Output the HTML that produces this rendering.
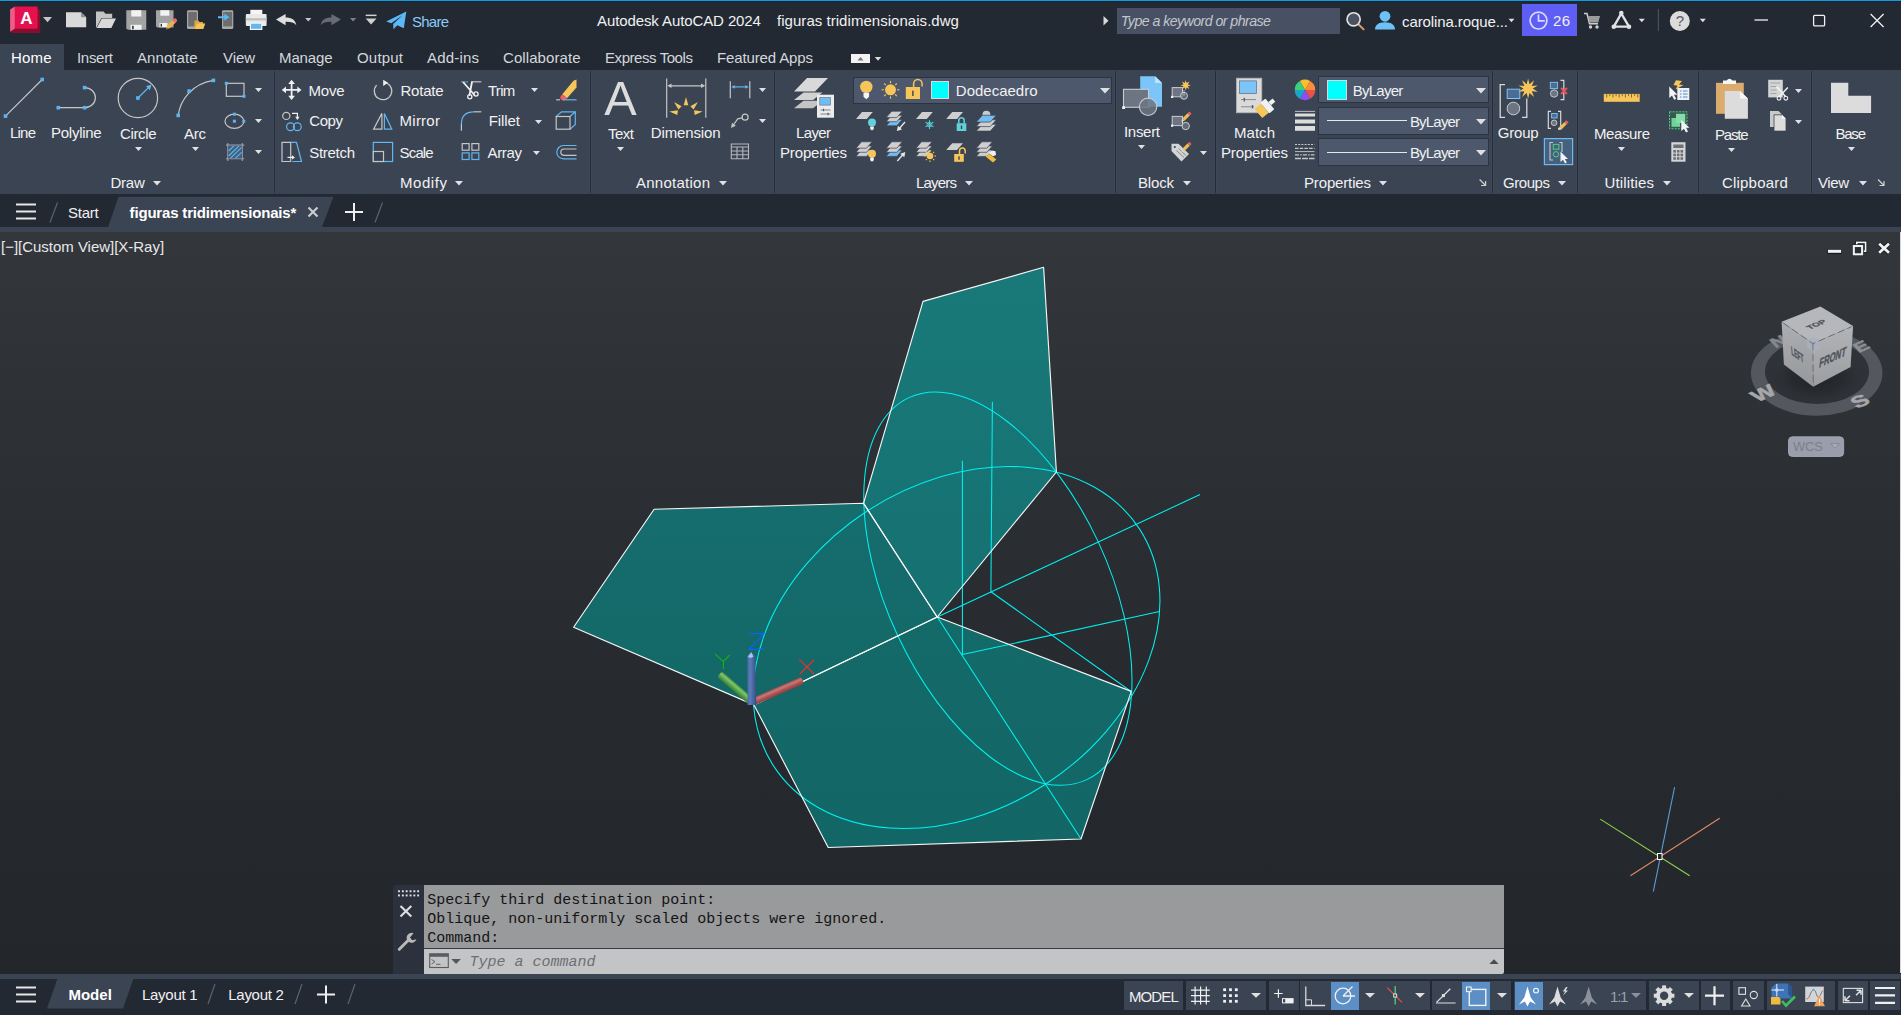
<!DOCTYPE html>
<html><head><meta charset="utf-8"><title>Autodesk AutoCAD 2024 - figuras tridimensionais.dwg</title>
<style>
html,body{margin:0;padding:0}
body{width:1901px;height:1015px;overflow:hidden;position:relative;background:#222933;font-family:"Liberation Sans",sans-serif;}
.t{position:absolute;white-space:nowrap;line-height:20px;}
.b{position:absolute;display:block;overflow:visible}
</style></head><body>
<div class="b" style="left:0.0px;top:0.0px;width:1901.0px;height:1.0px;background:#0b9fe6;"></div>
<div class="b" style="left:0.0px;top:1.0px;width:1901.0px;height:1.0px;background:#1c222b;"></div>
<div class="b" style="left:0.0px;top:2.0px;width:1901.0px;height:68.0px;background:#222933;"></div>
<div class="b" style="left:0.0px;top:44.0px;width:64.0px;height:26.0px;background:#3b4453;"></div>
<div class="b" style="left:0.0px;top:70.0px;width:1901.0px;height:124.0px;background:#3b4453;"></div>
<div class="b" style="left:0.0px;top:194.0px;width:1901.0px;height:34.0px;background:#222933;"></div>
<div class="b" style="left:0.0px;top:227.0px;width:1901.0px;height:5.0px;background:#3b4453;"></div>
<div class="b" style="left:0.0px;top:232.0px;width:1901.0px;height:742.0px;background:linear-gradient(#33373c 0%,#2b2e33 35%,#26292e 65%,#23262b 100%);"></div>
<div class="b" style="left:1900.0px;top:232.0px;width:1.0px;height:741.0px;background:#d4d4e2;"></div>
<div class="b" style="left:0.0px;top:974.0px;width:1901.0px;height:5.0px;background:#3b4453;"></div>
<div class="b" style="left:0.0px;top:979.0px;width:1901.0px;height:36.0px;background:#222933;"></div>
<div class="t" style="left:412.0px;top:11.8px;color:#8ccbf5;font-size:15px;letter-spacing:-0.76px;">Share</div>
<div class="t" style="left:597.0px;top:11.3px;color:#f1f1f1;font-size:15px;letter-spacing:-0.10px;">Autodesk AutoCAD 2024</div>
<div class="t" style="left:777.0px;top:11.3px;color:#f1f1f1;font-size:15px;letter-spacing:0.04px;">figuras tridimensionais.dwg</div>
<div class="b" style="left:1117.0px;top:8.0px;width:223.0px;height:26.0px;background:#485163;"></div>
<div class="t" style="left:1120.8px;top:11.4px;color:#c2c6ce;font-size:14.2px;letter-spacing:-0.56px;font-style:italic;">Type a keyword or phrase</div>
<div class="t" style="left:1402.0px;top:11.8px;color:#f1f1f1;font-size:15px;letter-spacing:-0.10px;">carolina.roque...</div>
<div class="b" style="left:1522.0px;top:4.0px;width:55.0px;height:32.0px;background:#5e5ef5;"></div>
<div class="t" style="left:1553.0px;top:11.3px;color:#f1f1f1;font-size:15px;letter-spacing:0.31px;">26</div>
<div class="t" style="left:11.0px;top:48.3px;color:#ffffff;font-size:15px;letter-spacing:0.16px;">Home</div>
<div class="t" style="left:77.0px;top:48.3px;color:#d4d7dc;font-size:15px;letter-spacing:-0.30px;">Insert</div>
<div class="t" style="left:137.0px;top:48.3px;color:#d4d7dc;font-size:15px;letter-spacing:0.08px;">Annotate</div>
<div class="t" style="left:223.0px;top:48.3px;color:#d4d7dc;font-size:15px;letter-spacing:-0.08px;">View</div>
<div class="t" style="left:279.0px;top:48.3px;color:#d4d7dc;font-size:15px;letter-spacing:-0.12px;">Manage</div>
<div class="t" style="left:357.0px;top:48.3px;color:#d4d7dc;font-size:15px;letter-spacing:0.19px;">Output</div>
<div class="t" style="left:427.0px;top:48.3px;color:#d4d7dc;font-size:15px;letter-spacing:0.19px;">Add-ins</div>
<div class="t" style="left:503.0px;top:48.3px;color:#d4d7dc;font-size:15px;letter-spacing:0.08px;">Collaborate</div>
<div class="t" style="left:605.0px;top:48.3px;color:#d4d7dc;font-size:15px;letter-spacing:-0.43px;">Express Tools</div>
<div class="t" style="left:717.0px;top:48.3px;color:#d4d7dc;font-size:15px;letter-spacing:-0.13px;">Featured Apps</div>
<div class="b" style="left:273.0px;top:71.0px;width:3.0px;height:122.0px;background:#3f4858;"></div>
<div class="b" style="left:274.0px;top:71.0px;width:1.0px;height:122.0px;background:#242a36;"></div>
<div class="b" style="left:589.0px;top:71.0px;width:3.0px;height:122.0px;background:#3f4858;"></div>
<div class="b" style="left:590.0px;top:71.0px;width:1.0px;height:122.0px;background:#242a36;"></div>
<div class="b" style="left:773.0px;top:71.0px;width:3.0px;height:122.0px;background:#3f4858;"></div>
<div class="b" style="left:774.0px;top:71.0px;width:1.0px;height:122.0px;background:#242a36;"></div>
<div class="b" style="left:1114.0px;top:71.0px;width:3.0px;height:122.0px;background:#3f4858;"></div>
<div class="b" style="left:1115.0px;top:71.0px;width:1.0px;height:122.0px;background:#242a36;"></div>
<div class="b" style="left:1214.0px;top:71.0px;width:3.0px;height:122.0px;background:#3f4858;"></div>
<div class="b" style="left:1215.0px;top:71.0px;width:1.0px;height:122.0px;background:#242a36;"></div>
<div class="b" style="left:1491.0px;top:71.0px;width:3.0px;height:122.0px;background:#3f4858;"></div>
<div class="b" style="left:1492.0px;top:71.0px;width:1.0px;height:122.0px;background:#242a36;"></div>
<div class="b" style="left:1576.0px;top:71.0px;width:3.0px;height:122.0px;background:#3f4858;"></div>
<div class="b" style="left:1577.0px;top:71.0px;width:1.0px;height:122.0px;background:#242a36;"></div>
<div class="b" style="left:1697.0px;top:71.0px;width:3.0px;height:122.0px;background:#3f4858;"></div>
<div class="b" style="left:1698.0px;top:71.0px;width:1.0px;height:122.0px;background:#242a36;"></div>
<div class="b" style="left:1810.0px;top:71.0px;width:3.0px;height:122.0px;background:#3f4858;"></div>
<div class="b" style="left:1811.0px;top:71.0px;width:1.0px;height:122.0px;background:#242a36;"></div>
<div class="t" style="left:110.4px;top:173.1px;color:#f1f1f1;font-size:15px;letter-spacing:-0.20px;">Draw</div>
<svg class="b" style="left:152.6px;top:181.2px;" width="8" height="4.5" viewBox="0 0 8 4.5"><path d="M0 0H8L4.0 4.5Z" fill="#e0e0e0"/></svg>
<div class="t" style="left:400.0px;top:173.1px;color:#f1f1f1;font-size:15px;letter-spacing:0.56px;">Modify</div>
<svg class="b" style="left:455.0px;top:181.2px;" width="8" height="4.5" viewBox="0 0 8 4.5"><path d="M0 0H8L4.0 4.5Z" fill="#e0e0e0"/></svg>
<div class="t" style="left:636.0px;top:173.1px;color:#f1f1f1;font-size:15px;letter-spacing:0.25px;">Annotation</div>
<svg class="b" style="left:719.0px;top:181.2px;" width="8" height="4.5" viewBox="0 0 8 4.5"><path d="M0 0H8L4.0 4.5Z" fill="#e0e0e0"/></svg>
<div class="t" style="left:916.0px;top:173.1px;color:#f1f1f1;font-size:15px;letter-spacing:-0.80px;">Layers</div>
<svg class="b" style="left:965.0px;top:181.2px;" width="8" height="4.5" viewBox="0 0 8 4.5"><path d="M0 0H8L4.0 4.5Z" fill="#e0e0e0"/></svg>
<div class="t" style="left:1138.0px;top:173.1px;color:#f1f1f1;font-size:15px;letter-spacing:-0.17px;">Block</div>
<svg class="b" style="left:1183.0px;top:181.2px;" width="8" height="4.5" viewBox="0 0 8 4.5"><path d="M0 0H8L4.0 4.5Z" fill="#e0e0e0"/></svg>
<div class="t" style="left:1304.0px;top:173.1px;color:#f1f1f1;font-size:15px;letter-spacing:-0.15px;">Properties</div>
<svg class="b" style="left:1379.2px;top:181.2px;" width="8" height="4.5" viewBox="0 0 8 4.5"><path d="M0 0H8L4.0 4.5Z" fill="#e0e0e0"/></svg>
<div class="t" style="left:1502.9px;top:173.1px;color:#f1f1f1;font-size:15px;letter-spacing:-0.42px;">Groups</div>
<svg class="b" style="left:1558.3px;top:181.2px;" width="8" height="4.5" viewBox="0 0 8 4.5"><path d="M0 0H8L4.0 4.5Z" fill="#e0e0e0"/></svg>
<div class="t" style="left:1604.4px;top:173.1px;color:#f1f1f1;font-size:15px;letter-spacing:0.16px;">Utilities</div>
<svg class="b" style="left:1662.8px;top:181.2px;" width="8" height="4.5" viewBox="0 0 8 4.5"><path d="M0 0H8L4.0 4.5Z" fill="#e0e0e0"/></svg>
<div class="t" style="left:1722.0px;top:173.1px;color:#f1f1f1;font-size:15px;letter-spacing:0.19px;">Clipboard</div>
<div class="t" style="left:1818.0px;top:173.1px;color:#f1f1f1;font-size:15px;letter-spacing:-0.41px;">View</div>
<svg class="b" style="left:1858.8px;top:181.2px;" width="8" height="4.5" viewBox="0 0 8 4.5"><path d="M0 0H8L4.0 4.5Z" fill="#e0e0e0"/></svg>
<div class="t" style="left:10.0px;top:123.3px;color:#f1f1f1;font-size:15px;letter-spacing:-0.79px;">Line</div>
<div class="t" style="left:51.0px;top:123.3px;color:#f1f1f1;font-size:15px;letter-spacing:-0.26px;">Polyline</div>
<div class="t" style="left:120.0px;top:124.0px;color:#f1f1f1;font-size:15px;letter-spacing:-0.35px;">Circle</div>
<div class="t" style="left:184.0px;top:124.0px;color:#f1f1f1;font-size:15px;letter-spacing:-0.25px;">Arc</div>
<div class="t" style="left:608.0px;top:124.0px;color:#f1f1f1;font-size:15px;letter-spacing:-0.50px;">Text</div>
<div class="t" style="left:650.7px;top:123.3px;color:#f1f1f1;font-size:15px;letter-spacing:-0.11px;">Dimension</div>
<div class="t" style="left:796.0px;top:123.3px;color:#f1f1f1;font-size:15px;letter-spacing:-0.63px;">Layer</div>
<div class="t" style="left:780.0px;top:142.8px;color:#f1f1f1;font-size:15px;letter-spacing:-0.15px;">Properties</div>
<div class="t" style="left:1124.0px;top:122.3px;color:#f1f1f1;font-size:15px;letter-spacing:-0.30px;">Insert</div>
<div class="t" style="left:1234.0px;top:123.0px;color:#f1f1f1;font-size:15px;letter-spacing:0.04px;">Match</div>
<div class="t" style="left:1221.0px;top:142.8px;color:#f1f1f1;font-size:15px;letter-spacing:-0.15px;">Properties</div>
<div class="t" style="left:1497.8px;top:123.0px;color:#f1f1f1;font-size:15px;letter-spacing:-0.20px;">Group</div>
<div class="t" style="left:1594.0px;top:124.3px;color:#f1f1f1;font-size:15px;letter-spacing:-0.39px;">Measure</div>
<div class="t" style="left:1715.0px;top:125.2px;color:#f1f1f1;font-size:15px;letter-spacing:-1.20px;">Paste</div>
<div class="t" style="left:1835.4px;top:124.3px;color:#f1f1f1;font-size:15px;letter-spacing:-1.20px;">Base</div>
<svg class="b" style="left:134.5px;top:146.8px;" width="7" height="4" viewBox="0 0 7 4"><path d="M0 0H7L3.5 4Z" fill="#e0e0e0"/></svg>
<svg class="b" style="left:191.5px;top:146.8px;" width="7" height="4" viewBox="0 0 7 4"><path d="M0 0H7L3.5 4Z" fill="#e0e0e0"/></svg>
<svg class="b" style="left:616.9px;top:146.8px;" width="7" height="4" viewBox="0 0 7 4"><path d="M0 0H7L3.5 4Z" fill="#e0e0e0"/></svg>
<svg class="b" style="left:1138.1px;top:145.0px;" width="7" height="4" viewBox="0 0 7 4"><path d="M0 0H7L3.5 4Z" fill="#e0e0e0"/></svg>
<svg class="b" style="left:1618.2px;top:146.8px;" width="7" height="4" viewBox="0 0 7 4"><path d="M0 0H7L3.5 4Z" fill="#e0e0e0"/></svg>
<svg class="b" style="left:1727.8px;top:147.6px;" width="7" height="4" viewBox="0 0 7 4"><path d="M0 0H7L3.5 4Z" fill="#e0e0e0"/></svg>
<svg class="b" style="left:1847.5px;top:146.8px;" width="7" height="4" viewBox="0 0 7 4"><path d="M0 0H7L3.5 4Z" fill="#e0e0e0"/></svg>
<div class="t" style="left:308.6px;top:80.9px;color:#f1f1f1;font-size:15px;letter-spacing:-0.23px;">Move</div>
<div class="t" style="left:309.3px;top:111.4px;color:#f1f1f1;font-size:15px;letter-spacing:-0.44px;">Copy</div>
<div class="t" style="left:309.3px;top:142.6px;color:#f1f1f1;font-size:15px;letter-spacing:-0.30px;">Stretch</div>
<div class="t" style="left:400.4px;top:80.9px;color:#f1f1f1;font-size:15px;letter-spacing:-0.18px;">Rotate</div>
<div class="t" style="left:399.6px;top:111.4px;color:#f1f1f1;font-size:15px;letter-spacing:0.23px;">Mirror</div>
<div class="t" style="left:399.6px;top:142.6px;color:#f1f1f1;font-size:15px;letter-spacing:-0.86px;">Scale</div>
<div class="t" style="left:487.9px;top:80.9px;color:#f1f1f1;font-size:15px;letter-spacing:-0.68px;">Trim</div>
<div class="t" style="left:488.8px;top:111.4px;color:#f1f1f1;font-size:15px;letter-spacing:-0.11px;">Fillet</div>
<div class="t" style="left:487.6px;top:142.6px;color:#f1f1f1;font-size:15px;letter-spacing:-0.38px;">Array</div>
<svg class="b" style="left:254.5px;top:88.0px;" width="7" height="4" viewBox="0 0 7 4"><path d="M0 0H7L3.5 4Z" fill="#e0e0e0"/></svg>
<svg class="b" style="left:254.5px;top:119.0px;" width="7" height="4" viewBox="0 0 7 4"><path d="M0 0H7L3.5 4Z" fill="#e0e0e0"/></svg>
<svg class="b" style="left:254.5px;top:150.0px;" width="7" height="4" viewBox="0 0 7 4"><path d="M0 0H7L3.5 4Z" fill="#e0e0e0"/></svg>
<svg class="b" style="left:530.5px;top:88.0px;" width="7" height="4" viewBox="0 0 7 4"><path d="M0 0H7L3.5 4Z" fill="#e0e0e0"/></svg>
<svg class="b" style="left:534.5px;top:119.5px;" width="7" height="4" viewBox="0 0 7 4"><path d="M0 0H7L3.5 4Z" fill="#e0e0e0"/></svg>
<svg class="b" style="left:532.5px;top:150.5px;" width="7" height="4" viewBox="0 0 7 4"><path d="M0 0H7L3.5 4Z" fill="#e0e0e0"/></svg>
<svg class="b" style="left:759.3px;top:88.0px;" width="7" height="4" viewBox="0 0 7 4"><path d="M0 0H7L3.5 4Z" fill="#e0e0e0"/></svg>
<svg class="b" style="left:759.3px;top:119.0px;" width="7" height="4" viewBox="0 0 7 4"><path d="M0 0H7L3.5 4Z" fill="#e0e0e0"/></svg>
<svg class="b" style="left:1200.1px;top:150.5px;" width="7" height="4" viewBox="0 0 7 4"><path d="M0 0H7L3.5 4Z" fill="#e0e0e0"/></svg>
<svg class="b" style="left:1794.8px;top:88.6px;" width="7" height="4" viewBox="0 0 7 4"><path d="M0 0H7L3.5 4Z" fill="#e0e0e0"/></svg>
<svg class="b" style="left:1794.8px;top:119.8px;" width="7" height="4" viewBox="0 0 7 4"><path d="M0 0H7L3.5 4Z" fill="#e0e0e0"/></svg>
<div class="b" style="left:852.5px;top:76.6px;width:259.0px;height:27.0px;background:#4d586d;border:1px solid #2d3441;box-sizing:border-box"></div>
<div class="b" style="left:931.3px;top:81.2px;width:17.8px;height:17.8px;background:#00ffff;border:1px solid #d8d8d8;box-sizing:border-box"></div>
<div class="t" style="left:955.8px;top:80.9px;color:#f1f1f1;font-size:15px;letter-spacing:-0.00px;">Dodecaedro</div>
<svg class="b" style="left:1100.0px;top:87.8px;" width="10" height="5.5" viewBox="0 0 10 5.5"><path d="M0 0H10L5.0 5.5Z" fill="#e0e0e0"/></svg>
<div class="b" style="left:1318.2px;top:76.2px;width:170.7px;height:27.3px;background:#4d586d;border:1px solid #2d3441;box-sizing:border-box"></div>
<svg class="b" style="left:1476.2px;top:87.5px;" width="10" height="5.5" viewBox="0 0 10 5.5"><path d="M0 0H10L5.0 5.5Z" fill="#e0e0e0"/></svg>
<div class="b" style="left:1318.2px;top:107.3px;width:170.7px;height:27.3px;background:#4d586d;border:1px solid #2d3441;box-sizing:border-box"></div>
<svg class="b" style="left:1476.2px;top:118.5px;" width="10" height="5.5" viewBox="0 0 10 5.5"><path d="M0 0H10L5.0 5.5Z" fill="#e0e0e0"/></svg>
<div class="b" style="left:1318.2px;top:138.4px;width:170.7px;height:27.3px;background:#4d586d;border:1px solid #2d3441;box-sizing:border-box"></div>
<svg class="b" style="left:1476.2px;top:149.7px;" width="10" height="5.5" viewBox="0 0 10 5.5"><path d="M0 0H10L5.0 5.5Z" fill="#e0e0e0"/></svg>
<div class="b" style="left:1327.0px;top:80.0px;width:20.0px;height:19.8px;background:#00ffff;border:1px solid #d8d8d8;box-sizing:border-box"></div>
<div class="t" style="left:1352.7px;top:80.8px;color:#f1f1f1;font-size:15px;letter-spacing:-0.75px;">ByLayer</div>
<div class="b" style="left:1327.0px;top:119.8px;width:80.0px;height:1.2px;background:#e8e8e8;"></div>
<div class="t" style="left:1409.9px;top:111.7px;color:#f1f1f1;font-size:15px;letter-spacing:-0.80px;">ByLayer</div>
<div class="b" style="left:1327.0px;top:151.8px;width:80.0px;height:1.2px;background:#e8e8e8;"></div>
<div class="t" style="left:1409.9px;top:143.0px;color:#f1f1f1;font-size:15px;letter-spacing:-0.80px;">ByLayer</div>
<div class="t" style="left:68.0px;top:202.8px;color:#f1f1f1;font-size:15px;letter-spacing:-0.24px;">Start</div>
<svg class="b" style="left:0;top:194px" width="400" height="34" viewBox="0 0 400 34"><path d="M108 33L118.5 2.7H333.5L322 33Z" fill="#3b4453"/><path d="M50 28.5L57.5 8.5M375 28.5L382.5 8.5" stroke="#5a6272" stroke-width="1.2" fill="none"/><path d="M16 10.5H36M16 17.5H36M16 24.5H36" stroke="#e6e6e6" stroke-width="2"/><path d="M308.5 13.5L317.5 22.5M317.5 13.5L308.5 22.5" stroke="#c8ccd2" stroke-width="2.2"/><path d="M345 18H363M354 9V27" stroke="#f0f0f0" stroke-width="2"/></svg>
<div class="t" style="left:129.6px;top:202.8px;color:#ffffff;font-size:15px;letter-spacing:-0.18px;font-weight:bold;">figuras tridimensionais*</div>
<div class="t" style="left:1.0px;top:237.3px;color:#e8e8e8;font-size:15px;letter-spacing:-0.02px;">[−][Custom View][X-Ray]</div>
<svg class="b" style="left:0;top:975px" width="400" height="40" viewBox="0 0 400 40"><path d="M47 33.5L57.5 3.5H133.5L123 33.5Z" fill="#3b4453"/><path d="M208 29L215 9M295 29L302 9M348 29L355 9" stroke="#5a6272" stroke-width="1.2" fill="none"/><path d="M16 12.5H36M16 19.5H36M16 26.5H36" stroke="#e6e6e6" stroke-width="2"/><path d="M317 19.5H335M326 10.5V28.5" stroke="#f0f0f0" stroke-width="2"/></svg>
<div class="t" style="left:68.4px;top:984.8px;color:#ffffff;font-size:15px;letter-spacing:0.02px;font-weight:bold;">Model</div>
<div class="t" style="left:142.0px;top:984.8px;color:#f1f1f1;font-size:15px;letter-spacing:-0.28px;">Layout 1</div>
<div class="t" style="left:228.3px;top:984.8px;color:#f1f1f1;font-size:15px;letter-spacing:-0.29px;">Layout 2</div>
<div class="b" style="left:1123.8px;top:981.3px;width:58.9px;height:29.2px;background:#3b4453;"></div>
<div class="b" style="left:1185.8px;top:981.3px;width:80.4px;height:29.2px;background:#3b4453;"></div>
<div class="b" style="left:1269.0px;top:981.3px;width:29.8px;height:29.2px;background:#3b4453;"></div>
<div class="b" style="left:1300.0px;top:981.3px;width:129.7px;height:29.2px;background:#3b4453;"></div>
<div class="b" style="left:1432.0px;top:981.3px;width:79.0px;height:29.2px;background:#3b4453;"></div>
<div class="b" style="left:1514.3px;top:981.3px;width:131.7px;height:29.2px;background:#3b4453;"></div>
<div class="b" style="left:1649.0px;top:981.3px;width:50.0px;height:29.2px;background:#3b4453;"></div>
<div class="b" style="left:1700.5px;top:981.3px;width:29.5px;height:29.2px;background:#3b4453;"></div>
<div class="b" style="left:1732.7px;top:981.3px;width:31.3px;height:29.2px;background:#3b4453;"></div>
<div class="b" style="left:1766.9px;top:981.3px;width:68.1px;height:29.2px;background:#3b4453;"></div>
<div class="b" style="left:1838.0px;top:981.3px;width:30.0px;height:29.2px;background:#3b4453;"></div>
<div class="b" style="left:1869.6px;top:981.3px;width:30.4px;height:29.2px;background:#3b4453;"></div>
<div class="b" style="left:1331.0px;top:982.0px;width:27.8px;height:28.0px;background:#5d8fc7;"></div>
<div class="b" style="left:1461.9px;top:982.0px;width:28.0px;height:28.0px;background:#5d8fc7;"></div>
<div class="b" style="left:1514.8px;top:982.0px;width:28.4px;height:28.0px;background:#5d8fc7;"></div>
<div class="t" style="left:1128.9px;top:986.5px;color:#f1f1f1;font-size:15px;letter-spacing:-0.84px;">MODEL</div>
<div class="t" style="left:1610.0px;top:986.5px;color:#9aa0ac;font-size:15px;letter-spacing:-1.20px;">1:1</div>
<svg class="b" style="left:1250.8px;top:993.2px;" width="10" height="4.8" viewBox="0 0 10 4.8"><path d="M0 0H10L5.0 4.8Z" fill="#e0e0e0"/></svg>
<svg class="b" style="left:1365.0px;top:993.2px;" width="10" height="4.8" viewBox="0 0 10 4.8"><path d="M0 0H10L5.0 4.8Z" fill="#e0e0e0"/></svg>
<svg class="b" style="left:1414.8px;top:993.2px;" width="10" height="4.8" viewBox="0 0 10 4.8"><path d="M0 0H10L5.0 4.8Z" fill="#e0e0e0"/></svg>
<svg class="b" style="left:1496.5px;top:993.2px;" width="10" height="4.8" viewBox="0 0 10 4.8"><path d="M0 0H10L5.0 4.8Z" fill="#e0e0e0"/></svg>
<svg class="b" style="left:1683.8px;top:993.2px;" width="10" height="4.8" viewBox="0 0 10 4.8"><path d="M0 0H10L5.0 4.8Z" fill="#e0e0e0"/></svg>
<svg class="b" style="left:1631.0px;top:993.2px;" width="10" height="4.8" viewBox="0 0 10 4.8"><path d="M0 0H10L5.0 4.8Z" fill="#8b919d"/></svg>
<svg class="b" style="left:0;top:233px" width="1901" height="742" viewBox="0 233 1901 742"><defs>
<linearGradient id="gt" x1="0" y1="0" x2="0" y2="1"><stop offset="0" stop-color="#197979"/><stop offset="1" stop-color="#167171"/></linearGradient>
<linearGradient id="gl" x1="0" y1="0" x2="0" y2="1"><stop offset="0" stop-color="#166d6d"/><stop offset="1" stop-color="#136767"/></linearGradient>
<linearGradient id="gb" x1="0" y1="0" x2="0" y2="1"><stop offset="0" stop-color="#146969"/><stop offset="1" stop-color="#136666"/></linearGradient>
<linearGradient id="ax" gradientUnits="userSpaceOnUse" x1="0" y1="-3.75" x2="0" y2="3.75"><stop offset="0" stop-color="#9a4a4a"/><stop offset="0.3" stop-color="#c87a7a"/><stop offset="0.6" stop-color="#b25555"/><stop offset="1" stop-color="#854040"/></linearGradient>
<linearGradient id="ay" gradientUnits="userSpaceOnUse" x1="0" y1="3.75" x2="0" y2="-3.75"><stop offset="0" stop-color="#4a8a40"/><stop offset="0.3" stop-color="#7cc86a"/><stop offset="0.65" stop-color="#55a04a"/><stop offset="1" stop-color="#3a7a32"/></linearGradient>
<linearGradient id="az" gradientUnits="userSpaceOnUse" x1="-4.4" y1="0" x2="4.4" y2="0"><stop offset="0" stop-color="#4a6aa6"/><stop offset="0.3" stop-color="#5b7cba"/><stop offset="0.7" stop-color="#44629a"/><stop offset="1" stop-color="#334c80"/></linearGradient>
</defs><polygon points="923.0,301.4 1043.6,267.3 1056.4,472.0 937.2,617.0 863.5,503.3" fill="url(#gt)"/><polygon points="654.1,509.3 863.5,503.3 937.2,617.0 754.0,704.9 573.6,627.3" fill="url(#gl)"/><polygon points="754.0,704.9 937.2,617.0 1131.3,691.4 1081.0,839.0 828.2,847.5" fill="url(#gb)"/><g fill="none" stroke="#00f0f0" stroke-width="1.05"><ellipse cx="956.57" cy="647.49" rx="217.99" ry="163.14" transform="rotate(147.11 956.57 647.49)"/><ellipse cx="997.88" cy="588.61" rx="210.69" ry="110.71" transform="rotate(-114.97 997.88 588.61)"/><path d="M992.4 401.7L990.9 591.7M962.4 460.7V654.6M937.3 617L1200 494.6M990.9 591.7L1131.5 691.8M962.4 654.6L1159.4 611.5M937.3 617L1081 839"/></g><g fill="none" stroke="#f4f6f6" stroke-width="1.15" stroke-linejoin="round"><polygon points="654.1,509.3 863.5,503.3 937.2,617.0 754.0,704.9 573.6,627.3"/><polygon points="923.0,301.4 1043.6,267.3 1056.4,472.0 937.2,617.0 863.5,503.3"/><polygon points="754.0,704.9 937.2,617.0 1131.3,691.4 1081.0,839.0 828.2,847.5"/></g><g transform="translate(752 702) rotate(-139.5)"><rect x="0" y="-3.75" width="42.7" height="7.5" rx="1.8" fill="url(#ay)"/></g><g transform="translate(752 702.2) rotate(-23.4)"><rect x="0" y="-3.75" width="55.1" height="7.5" rx="1.8" fill="url(#ax)"/></g><g transform="translate(752 0)"><path d="M-4.4 705H4.4L3.2 656L-0.8 652L-4.600 656Z" fill="url(#az)"/><path d="M-4.3 657L-0.8 652.2L1.5 656.500L-1 658Z" fill="#a9c2ee"/></g><path d="M749.1 633.6H764L749.1 649.3H764" fill="none" stroke="#0a62ff" stroke-width="1.2"/><path d="M715 653.900L723.400 661.400L729.800 655M723.400 661.400V669" fill="none" stroke="#12b012" stroke-width="1.2"/><path d="M799.200 659.200L814 674M814 660L799.800 674" fill="none" stroke="#e23232" stroke-width="1.2"/><path d="M1674.6 787.1L1653.3 891.6" stroke="#5b9ad5" stroke-width="1.1"/><path d="M1600.2 819.1L1689.7 875.8" stroke="#8fd14f" stroke-width="1.1"/><path d="M1719.7 818.3L1630.4 875.8" stroke="#e08a66" stroke-width="1.1"/><rect x="1657.5" y="853.5" width="4.5" height="6" fill="#24272c" stroke="#ffffff" stroke-width="1"/></svg>
<div class="b" style="left:393.0px;top:884.5px;width:31.0px;height:89.5px;background:#2b313d;border-top-left-radius:3px"></div>
<div class="b" style="left:424.0px;top:885.0px;width:1080.0px;height:63.0px;background:#999a9c;"></div>
<div class="b" style="left:424.0px;top:948.0px;width:1080.0px;height:25.5px;background:#c3c4c6;border-top:1px solid #343946;box-sizing:border-box;border-bottom-right-radius:2px"></div>
<div class="t" style="left:427.3px;top:890.9px;color:#141414;font-size:15px;font-family:'Liberation Mono',monospace;">Specify third destination point:</div>
<div class="t" style="left:427.3px;top:909.7px;color:#141414;font-size:15px;font-family:'Liberation Mono',monospace;">Oblique, non-uniformly scaled objects were ignored.</div>
<div class="t" style="left:427.3px;top:928.6px;color:#141414;font-size:15px;font-family:'Liberation Mono',monospace;">Command:</div>
<div class="t" style="left:469.6px;top:952.6px;color:#6e6f72;font-size:15px;font-style:italic;font-family:'Liberation Mono',monospace;">Type a command</div>
<svg class="b" style="left:0;top:0" width="1901" height="44" viewBox="0 0 1901 44"><path d="M12.6 9.5H40.2V32.9H12.6Z" fill="#870d2f"/><path d="M10.1 9.6L14.9 6.5V28.7L10.1 31.9Z" fill="#ee5d86"/><path d="M10.1 31.9L14.9 28.7H37.6L40.2 32.9H12.6Z" fill="#870d2f"/><rect x="14.9" y="6.5" width="22.7" height="22.2" fill="#e5104e"/><text x="26.4" y="24.2" font-family="Liberation Sans,sans-serif" font-weight="bold" font-size="17" fill="#fff" text-anchor="middle">A</text><path d="M43 17H52L47.5 22.2Z" fill="#c6c6c6"/><path d="M66 12.2H81L86.2 17.2V27.3H66Z" fill="#d9d9d9"/><path d="M81 12.2V17.2H86.2Z" fill="#8e9299"/><path d="M96 27.8V11.6H103.5L105.5 13.8H112.2V18H101.5L96.3 27.8Z" fill="#c4c4c4"/><path d="M101.8 18.6H116L111.3 27.9H96.8Z" fill="#d9d9d9"/><path d="M126.3 10.2H146.3 V29.8H127.8L126.3 28.3Z" fill="#a3a3a3"/><rect x="131.3" y="10.2" width="10" height="6.3" fill="#f2f2f2"/><rect x="130.6" y="24.8" width="11" height="5" fill="#f2f2f2"/><rect x="132.1" y="25.8" width="1.6" height="3.4" fill="#333"/><path d="M156 10.2H173.5V27.5H157.3L156 26.2Z" fill="#a3a3a3"/><rect x="160.3" y="10.2" width="9" height="5.5" fill="#f2f2f2"/><rect x="159.5" y="23" width="8" height="4.3" fill="#f2f2f2"/><rect x="160.6" y="23.8" width="1.4" height="2.8" fill="#333"/><path d="M166 28.6L167.3 25.2L173.2 19.5L176 22.2L170 28L166 29.6Z" fill="#e9b44c"/><path d="M172.3 20.3L174 18.6Q175.2 17.8 176.3 19L176.9 19.7Q177.5 20.9 176.6 21.8L175.1 23.2Z" fill="#ef6a6a"/><path d="M166 29.6L166.6 27.4L168.2 28.9Z" fill="#555"/><rect x="187" y="10.3" width="11" height="18.8" rx="1.4" fill="#a8a8a8"/><rect x="188.2" y="12" width="8.6" height="14.4" fill="#6d6d6d"/><path d="M194.6 28.8V20.8H198.3L199.4 22H203V23.4" fill="#d9a53f"/><path d="M194.6 28.8V20.8H198.5L199.4 22H203V28.8Z" fill="#d9a53f"/><path d="M197 23.6H205.3L203.3 28.9H194.8Z" fill="#f5c55a"/><rect x="222" y="10.3" width="11.3" height="18.8" rx="1.4" fill="#a8a8a8"/><rect x="223.2" y="12" width="8.9" height="14.4" fill="#6d6d6d"/><path d="M218 16.2H224.3V13.6L229.5 17.2L224.3 20.8V18.2H218Z" fill="#58b8f5"/><rect x="250.3" y="9.8" width="12" height="5" fill="#f4f4f4"/><rect x="245.8" y="14" width="20.8" height="12" rx="1" fill="#e9e9e9"/><rect x="245.8" y="18.2" width="20.8" height="2.2" fill="#bdbdbd"/><rect x="249.8" y="22.5" width="12.6" height="7.5" fill="#f4f4f4"/><rect x="251" y="23.8" width="10.2" height="5" fill="#62b6f2"/><path d="M276 19.4L285.6 13.9V17.4C291.5 17.4 295.4 19.5 296.3 25.2C294 22.3 291 21.6 285.6 21.7V25.3Z" fill="#dedede"/><path d="M305.2 18H311.4L308.3 21.6Z" fill="#c6c6c6"/><path d="M341 19.4L331.4 13.9V17.4C325.5 17.4 321.6 19.5 320.7 25.2C323 22.3 326 21.6 331.4 21.7V25.3Z" fill="#666b77"/><path d="M350 18H356.2L353.1 21.6Z" fill="#7b808b"/><rect x="365.7" y="14.6" width="10.8" height="1.5" fill="#d0d0d0"/><path d="M365.7 18.4H376.5L371.1 24.5Z" fill="#d0d0d0"/><path d="M386.2 21.5L406.3 11.5L403.8 28.2L397.3 25.3L393.5 29.2L393.2 24L402.5 15.2L391.3 23.2Z" fill="#5bb9f6"/><path d="M1103.5 16L1108.5 20.7L1103.5 25.4Z" fill="#d8d8d8"/><path d="M1358.600 24.500L1363.600 29.400" stroke="#d9a066" stroke-width="2" stroke-linecap="round"/><circle cx="1353.600" cy="19.300" r="6.600" fill="#4b5361" stroke="#e4e4e4" stroke-width="1.6"/><circle cx="1385" cy="16.3" r="5.4" fill="#6ec1f6"/><path d="M1375 29.6C1375 25 1378.5 22.3 1385 22.3C1391.500 22.3 1395 25 1395 29.6Z" fill="#6ec1f6"/><path d="M1508.600 18.8H1514.4L1511.5 22.2Z" fill="#e0e0e0"/><circle cx="1538.5" cy="20.6" r="8.4" fill="none" stroke="#d9d9ff" stroke-width="1.7"/><path d="M1538.5 14.5V20.9H1544.8" fill="none" stroke="#d9d9ff" stroke-width="1.7"/><path d="M1584 13.5H1587L1589.5 23.8H1598" fill="none" stroke="#cfcfcf" stroke-width="1.5"/><path d="M1588 16H1600L1598.3 22.4H1589.6Z" fill="#9b9b9b"/><circle cx="1590.5" cy="27" r="1.7" fill="#cfcfcf"/><circle cx="1597" cy="27" r="1.7" fill="#cfcfcf"/><path d="M1621.3 13.5L1629 26.6H1613.8Z" fill="none" stroke="#e2e2e2" stroke-width="2.4" stroke-linejoin="round"/><circle cx="1621.3" cy="13" r="2.3" fill="#e2e2e2"/><circle cx="1613.8" cy="26.8" r="2.3" fill="#e2e2e2"/><circle cx="1629" cy="26.8" r="2.3" fill="#e2e2e2"/><path d="M1638.8 18.8H1644.8L1641.8 22.2Z" fill="#e0e0e0"/><rect x="1657.8" y="9" width="1.2" height="22" fill="#465064"/><circle cx="1679.8" cy="21" r="10" fill="#dcdcdc"/><text x="1679.8" y="26.3" font-family="Liberation Sans,sans-serif" font-size="15" fill="#555a63" text-anchor="middle">?</text><path d="M1699.8 18.8H1705.8L1702.8 22.2Z" fill="#e0e0e0"/><path d="M1754.500 20H1768" stroke="#f0f0f0" stroke-width="1.3"/><rect x="1813.600" y="15.3" width="11" height="10.6" rx="1.2" fill="none" stroke="#f0f0f0" stroke-width="1.3"/><path d="M1870.600 14L1883.6 27M1883.600 14L1870.6 27" stroke="#f0f0f0" stroke-width="1.3"/></svg>
<svg class="b" style="left:0;top:44px" width="1901" height="150" viewBox="0 44 1901 150"><rect x="851" y="54" width="19" height="9" fill="#f3f3f3"/><path d="M857.500 60.5H863.5L860.500 57Z" fill="#777"/><path d="M874.8 56.9H881.2L878.0 60.7Z" fill="#dcdcdc"/><path d="M5.500 116.100L42.2 79.5" stroke="#c6c6c6" stroke-width="1.2"/><rect x="3.7" y="114.3" width="3.6" height="3.6" fill="#5ab4f0"/><rect x="40.4" y="77.7" width="3.6" height="3.6" fill="#5ab4f0"/><path d="M58.300 107.700H84.600A10.800 10.050 0 0 0 84.600 87.600" fill="none" stroke="#c6c6c6" stroke-width="1.2"/><rect x="56.5" y="105.9" width="3.6" height="3.6" fill="#5ab4f0"/><rect x="82.8" y="105.9" width="3.6" height="3.6" fill="#5ab4f0"/><rect x="82.8" y="85.8" width="3.6" height="3.6" fill="#5ab4f0"/><circle cx="137.900" cy="98" r="19.700" fill="none" stroke="#c6c6c6" stroke-width="1.2"/><path d="M137.900 98L149 87.100" stroke="#62b5f0" stroke-width="1.3"/><path d="M151.500 84.600L149.900 90.300L146 86.300Z" fill="#62b5f0"/><rect x="136.1" y="96.2" width="3.6" height="3.6" fill="#5ab4f0"/><path d="M178.200 115.400C180 101 191 84 213.400 80.400" fill="none" stroke="#c6c6c6" stroke-width="1.2"/><rect x="176.4" y="113.6" width="3.6" height="3.6" fill="#5ab4f0"/><rect x="187.3" y="89.3" width="3.6" height="3.6" fill="#5ab4f0"/><rect x="211.6" y="78.6" width="3.6" height="3.6" fill="#5ab4f0"/><rect x="226.300" y="83.300" width="17.700" height="13" fill="none" stroke="#c6c6c6" stroke-width="1.2"/><rect x="224.8" y="81.8" width="3" height="3" fill="#5ab4f0"/><rect x="242.5" y="94.8" width="3" height="3" fill="#5ab4f0"/><ellipse cx="234.400" cy="121.200" rx="9.400" ry="7.100" fill="none" stroke="#c6c6c6" stroke-width="1.2"/><rect x="232.9" y="119.7" width="3" height="3" fill="#5ab4f0"/><rect x="232.9" y="112.7" width="3" height="3" fill="#5ab4f0"/><rect x="242.3" y="119.7" width="3" height="3" fill="#5ab4f0"/><path d="M226 145.100H244.300M226 158.800H244.300M227.800 143V161M242.300 143V161" stroke="#9aa0aa" stroke-width="1.1"/><rect x="228.400" y="145.700" width="13.300" height="12.500" fill="#41607f"/><path d="M228.600 151L234 145.800M228.600 156L239 145.800M230.500 158.200L241.600 147.300M235.500 158.200L241.600 152.300" stroke="#62b5f0" stroke-width="1.1"/><path d="M291.600 81.500V98.300M283.300 89.900H300" stroke="#f0f0f0" stroke-width="1.8"/><path d="M291.600 79.800L295 84H288.200ZM291.600 100L295 95.800H288.200ZM281.800 89.900L286 86.500V93.300ZM301.500 89.900L297.300 86.500V93.300Z" fill="#f0f0f0"/><circle cx="286.300" cy="115.900" r="3.600" fill="none" stroke="#c6c6c6" stroke-width="1.2"/><circle cx="290.500" cy="126.700" r="3.900" fill="none" stroke="#62b5f0" stroke-width="1.2"/><circle cx="297.300" cy="126.700" r="3.900" fill="none" stroke="#62b5f0" stroke-width="1.2"/><path d="M292 113.400H297.400V117.500" fill="none" stroke="#f0f0f0" stroke-width="1.2"/><path d="M297.400 120L295.200 116.800H299.600Z" fill="#f0f0f0"/><path d="M290.700 142.400H282V161.500H290.700Z" fill="none" stroke="#c6c6c6" stroke-width="1.2"/><path d="M290.700 142.400H296.500L301.500 161.500H292.400" fill="none" stroke="#62b5f0" stroke-width="1.2"/><path d="M287.500 157.400H293" stroke="#f0f0f0" stroke-width="1.2"/><path d="M295 157.400L292 155.300V159.500Z" fill="#f0f0f0"/><path d="M376.600 85.100A8.700 8.700 0 1 0 383.800 82.300" fill="none" stroke="#c6c6c6" stroke-width="1.3"/><path d="M388 82.800L383.200 79.800V86Z" fill="#f0f0f0"/><path d="M381.900 113.400V129.200H373.600Z" fill="none" stroke="#c6c6c6" stroke-width="1.2"/><path d="M384.400 113.400V129.200H391.800Z" fill="none" stroke="#62b5f0" stroke-width="1.2"/><rect x="373.300" y="142.400" width="19.300" height="19.100" fill="none" stroke="#62b5f0" stroke-width="1.2"/><rect x="373.300" y="151.500" width="10.200" height="10" fill="#3b4453" stroke="#c6c6c6" stroke-width="1.2"/><path d="M461.400 81.800H468" stroke="#62b5f0" stroke-width="1.2" stroke-dasharray="1.500 1"/><path d="M473 81.800H481.300" stroke="#c6c6c6" stroke-width="1.2"/><path d="M463.500 82.500L474.500 95M472 82L469.500 95" stroke="#f0f0f0" stroke-width="1.800" stroke-linecap="round"/><circle cx="469.800" cy="96.800" r="2.100" fill="none" stroke="#f0f0f0" stroke-width="1.300"/><circle cx="476" cy="94" r="2.100" fill="none" stroke="#f0f0f0" stroke-width="1.300"/><path d="M461.400 130.800V124" stroke="#c6c6c6" stroke-width="1.2"/><path d="M461.400 124C461.400 116 466 111.800 474 111.800" fill="none" stroke="#62b5f0" stroke-width="1.2"/><path d="M474 111.800H481.300" stroke="#c6c6c6" stroke-width="1.2"/><rect x="462.2" y="143.6" width="6.900" height="6.600" fill="none" stroke="#c6c6c6" stroke-width="1.2"/><rect x="471.9" y="143.6" width="6.900" height="6.600" fill="none" stroke="#c6c6c6" stroke-width="1.2"/><rect x="462.2" y="152.9" width="6.900" height="6.600" fill="none" stroke="#62b5f0" stroke-width="1.2"/><rect x="471.9" y="152.9" width="6.900" height="6.600" fill="none" stroke="#62b5f0" stroke-width="1.2"/><path d="M562.300 94.200L573.500 80.800L576.500 79.500V87.500L567 98.300Z" fill="#f6c65b"/><path d="M562.300 94.200L567 98.300L564.800 100.200Q562.500 101 561 99.500Q559.500 97.500 560.800 96Z" fill="#ee5f6a"/><path d="M563.500 99.800H576.600" stroke="#62b5f0" stroke-width="1.200"/><path d="M556.200 99.800H560" stroke="#c6c6c6" stroke-width="1.200"/><path d="M556.200 116.500L561.500 111.800H575.300V124.500L570 129.200M570 116.500L575.300 111.800" fill="none" stroke="#62b5f0" stroke-width="1.200"/><rect x="556.200" y="116.500" width="13.800" height="12.700" fill="none" stroke="#c6c6c6" stroke-width="1.200"/><path d="M576.500 145.500H563.500A6.700 6.700 0 0 0 563.500 158.900H576.500" fill="none" stroke="#62b5f0" stroke-width="1.200"/><path d="M576.500 149H564A3.200 3.200 0 0 0 564 155.400H576.500" fill="none" stroke="#c6c6c6" stroke-width="1.200"/><text x="620.400" y="115.300" font-family="Liberation Sans,sans-serif" font-size="48.700" fill="#dcdcdc" text-anchor="middle">A</text><path d="M666.700 78.400V117.700M705.800 78.400V117.700M669 85.800H703.500" stroke="#c6c6c6" stroke-width="1.200"/><path d="M667.300 85.800L671.500 83.600V88ZM705.200 85.800L701 83.600V88Z" fill="#c6c6c6"/><path d="M669.4 111.5L677.9 110.3L677.3 114.9Z" fill="#f6c65b"/><path d="M674.1 101.9L681.6 106.2L678.4 109.4Z" fill="#f6c65b"/><path d="M686.0 97.0L688.3 105.3L683.7 105.3Z" fill="#f6c65b"/><path d="M697.9 101.9L693.6 109.4L690.4 106.2Z" fill="#f6c65b"/><path d="M702.6 111.5L694.7 114.9L694.1 110.3Z" fill="#f6c65b"/><path d="M730.300 81.200V98.300M749.800 81.200V98.300" stroke="#c6c6c6" stroke-width="1.200"/><path d="M733 86.900H747" stroke="#62b5f0" stroke-width="1.200"/><path d="M731.300 86.900L734.800 85V88.800ZM748.800 86.900L745.300 85V88.800Z" fill="#62b5f0"/><circle cx="745.100" cy="117.200" r="3" fill="none" stroke="#c6c6c6" stroke-width="1.200"/><path d="M742.100 117.800L737.700 118.900L733 125.500" fill="none" stroke="#c6c6c6" stroke-width="1.200"/><path d="M731 128L732 122.800L735.800 125.800Z" fill="#c6c6c6"/><path d="M731.300 144H748.500V158.700H731.300ZM731.300 147H748.500M731.300 151H748.500M731.300 154.800H748.500M737 147V158.700M742.800 147V158.700" fill="none" stroke="#b4b7bd" stroke-width="1.100"/><path d="M794.0 108.2L803.5 100.7H822.5L813.0 108.2Z" fill="#c4c4c4"/><path d="M794.0 100.1L803.5 92.6H822.5L813.0 100.1Z" fill="#d2d2d2"/><path d="M794.0 91.5L807.0 78.0H828.0L815.0 91.5Z" fill="#d9d9d9"/><rect x="817" y="94.700" width="17" height="23" fill="#ececec"/><rect x="819.800" y="97.600" width="10.600" height="7.500" fill="#6fbdf5" stroke="#5b6a7a" stroke-width="0.600"/><path d="M820.500 110H830.500M820.500 114H830.500" stroke="#707680" stroke-width="0.900"/><path d="M823.500 108.700V111.300M828 112.700V115.300" stroke="#505660" stroke-width="1.100"/><circle cx="866.3" cy="86.9" r="6.2" fill="#f6c65b"/><path d="M863.5 92.8H869.1V96.8L866.3 99.3L863.5 96.8Z" fill="#f4f4f4"/><circle cx="890.5" cy="89.8" r="5.5" fill="#f6c65b"/><path d="M897.1 89.8L899.4 89.8" stroke="#f6c65b" stroke-width="1.1"/><path d="M895.2 94.5L896.8 96.1" stroke="#f6c65b" stroke-width="1.1"/><path d="M890.5 96.4L890.5 98.7" stroke="#f6c65b" stroke-width="1.1"/><path d="M885.8 94.5L884.2 96.1" stroke="#f6c65b" stroke-width="1.1"/><path d="M883.9 89.8L881.6 89.8" stroke="#f6c65b" stroke-width="1.1"/><path d="M885.8 85.1L884.2 83.5" stroke="#f6c65b" stroke-width="1.1"/><path d="M890.5 83.2L890.5 80.9" stroke="#f6c65b" stroke-width="1.1"/><path d="M895.2 85.1L896.8 83.5" stroke="#f6c65b" stroke-width="1.1"/><rect x="905.8" y="87" width="14.2" height="12" fill="#f6c65b"/><rect x="912.2" y="90.6" width="1.4" height="5.4" fill="#3b4453"/><path d="M913.6 87V84.0A4.0 4.3 0 0 1 922.1 84.0V86.5" fill="none" stroke="#f6c65b" stroke-width="1.5"/><path d="M856.0 118.9L862.0 112.0H872.8L866.8 118.9Z" fill="#cfcfcf"/><circle cx="872" cy="122.6" r="4" fill="#62d0d8"/><path d="M870.2 126.4H873.8V129.0L872.0 130.6L870.2 129.0Z" fill="#f4f4f4"/><path d="M886.2 125.8L891.7 119.4H902.3L896.8 125.8Z" fill="#74bdf2" stroke="#3b4453" stroke-width="0.7"/><path d="M886.2 121.7L891.7 115.3H902.3L896.8 121.7Z" fill="#cfcfcf" stroke="#3b4453" stroke-width="0.7"/><path d="M886.2 117.6L891.7 111.2H902.3L896.8 117.6Z" fill="#cfcfcf" stroke="#3b4453" stroke-width="0.7"/><path d="M905 122L899.300 128.500" stroke="#e8e8e8" stroke-width="1.300"/><path d="M896.800 131L898 125.700L902 129.500Z" fill="#e8e8e8"/><path d="M916.0 118.9L922.0 112.0H932.8L926.8 118.9Z" fill="#cfcfcf"/><path d="M929.5 129.1L929.5 120.1" stroke="#55c8d2" stroke-width="1.100"/><path d="M925.6 126.8L933.4 122.3" stroke="#55c8d2" stroke-width="1.100"/><path d="M925.6 122.3L933.4 126.8" stroke="#55c8d2" stroke-width="1.100"/><circle cx="929.500" cy="124.600" r="2.300" fill="none" stroke="#55c8d2" stroke-width="0.900"/><path d="M946.2 118.9L952.2 112.0H963.0L957.0 118.9Z" fill="#cfcfcf"/><rect x="956.7" y="123.2" width="9.6" height="7.8" fill="#62d0d8"/><rect x="960.8" y="125.5" width="1.4" height="3.5" fill="#3b4453"/><path d="M958.8 123.2V120.7A2.7 2.9 0 0 1 964.2 120.7V123.2" fill="none" stroke="#62d0d8" stroke-width="1.5"/><circle cx="986.400" cy="114.800" r="4" fill="#c9c9c9"/><path d="M976.3 131.1L982.3 124.3H996.3L990.3 131.1Z" fill="#cfcfcf" stroke="#3b4453" stroke-width="0.7"/><path d="M976.3 126.6L982.3 119.8H996.3L990.3 126.6Z" fill="#cfcfcf" stroke="#3b4453" stroke-width="0.7"/><path d="M976.3 122.1L982.3 115.3H996.3L990.3 122.1Z" fill="#74bdf2" stroke="#3b4453" stroke-width="0.7"/><path d="M856.0 156.4L861.5 150.0H872.1L866.6 156.4Z" fill="#cfcfcf" stroke="#3b4453" stroke-width="0.7"/><path d="M856.0 152.3L861.5 145.9H872.1L866.6 152.3Z" fill="#cfcfcf" stroke="#3b4453" stroke-width="0.7"/><path d="M856.0 148.2L861.5 141.8H872.1L866.6 148.2Z" fill="#cfcfcf" stroke="#3b4453" stroke-width="0.7"/><circle cx="872" cy="153.8" r="4" fill="#f6c65b"/><path d="M870.2 157.6H873.8V160.2L872.0 161.8L870.2 160.2Z" fill="#f4f4f4"/><path d="M886.2 156.4L891.7 150.0H902.3L896.8 156.4Z" fill="#74bdf2" stroke="#3b4453" stroke-width="0.7"/><path d="M886.2 152.3L891.7 145.9H902.3L896.8 152.3Z" fill="#cfcfcf" stroke="#3b4453" stroke-width="0.7"/><path d="M886.2 148.2L891.7 141.8H902.3L896.8 148.2Z" fill="#cfcfcf" stroke="#3b4453" stroke-width="0.7"/><path d="M897.300 161L903 154.500" stroke="#e8e8e8" stroke-width="1.300"/><path d="M905.300 152L904.300 157.300L900.200 153.700Z" fill="#e8e8e8"/><path d="M916.0 156.4L921.5 150.0H932.1L926.6 156.4Z" fill="#cfcfcf" stroke="#3b4453" stroke-width="0.7"/><path d="M916.0 152.3L921.5 145.9H932.1L926.6 152.3Z" fill="#cfcfcf" stroke="#3b4453" stroke-width="0.7"/><path d="M916.0 148.2L921.5 141.8H932.1L926.6 148.2Z" fill="#cfcfcf" stroke="#3b4453" stroke-width="0.7"/><circle cx="930" cy="156" r="3.3" fill="#f6c65b"/><path d="M934.4 156.0L936.0 156.0" stroke="#f6c65b" stroke-width="1.1"/><path d="M933.1 159.1L934.2 160.2" stroke="#f6c65b" stroke-width="1.1"/><path d="M930.0 160.4L930.0 162.0" stroke="#f6c65b" stroke-width="1.1"/><path d="M926.9 159.1L925.8 160.2" stroke="#f6c65b" stroke-width="1.1"/><path d="M925.6 156.0L924.0 156.0" stroke="#f6c65b" stroke-width="1.1"/><path d="M926.9 152.9L925.8 151.8" stroke="#f6c65b" stroke-width="1.1"/><path d="M930.0 151.6L930.0 150.0" stroke="#f6c65b" stroke-width="1.1"/><path d="M933.1 152.9L934.2 151.8" stroke="#f6c65b" stroke-width="1.1"/><path d="M946.2 150.1L952.2 143.2H963.0L957.0 150.1Z" fill="#cfcfcf"/><rect x="954.2" y="154" width="9.6" height="7.8" fill="#f6c65b"/><rect x="958.3" y="156.3" width="1.4" height="3.5" fill="#3b4453"/><path d="M959.5 154V151.0A2.7 2.9 0 0 1 965.2 151.0V153.5" fill="none" stroke="#f6c65b" stroke-width="1.5"/><path d="M976.3 156.4L981.8 150.0H992.4L986.9 156.4Z" fill="#cfcfcf" stroke="#3b4453" stroke-width="0.7"/><path d="M976.3 152.3L981.8 145.9H992.4L986.9 152.3Z" fill="#cfcfcf" stroke="#3b4453" stroke-width="0.7"/><path d="M976.3 148.2L981.8 141.8H992.4L986.9 148.2Z" fill="#cfcfcf" stroke="#3b4453" stroke-width="0.7"/><path d="M985.800 156.800L989 153.500L996.300 159.500L993 162.600Z" fill="#f0b93f"/><path d="M988.500 153L992 150.500L995.500 151.300L996 155L993 156.300Z" fill="#f0f0f0"/><path d="M1140.200 76.200H1155.200L1162 83V106.800H1140.200Z" fill="#7cc5f8"/><path d="M1155.200 76.200V83H1162Z" fill="#bfe3fc"/><rect x="1123.500" y="89.300" width="25" height="18" fill="#6d7482" stroke="#c9ccd2" stroke-width="1.100"/><circle cx="1148.100" cy="106.800" r="8.700" fill="#6d7482" fill-opacity="0.850" stroke="#c9ccd2" stroke-width="1.100"/><rect x="1122.200" y="106.200" width="2.800" height="2.800" fill="#f0f0f0"/><rect x="1172.200" y="87.6" width="10.300" height="9.200" fill="#6d7482" stroke="#c9ccd2" stroke-width="1"/><rect x="1171" y="95.8" width="2.200" height="2.200" fill="#f0f0f0"/><circle cx="1184" cy="95.800" r="3.500" fill="#6d7482" fill-opacity="0.800" stroke="#c9ccd2" stroke-width="1"/><path d="M1184 90V95.800" stroke="#c9ccd2" stroke-width="0.800"/><polygon points="1185.7,80.1 1186.6,83.1 1189.4,81.6 1187.9,84.4 1190.9,85.3 1187.9,86.2 1189.4,89.0 1186.6,87.5 1185.7,90.5 1184.8,87.5 1182.0,89.0 1183.5,86.2 1180.5,85.3 1183.5,84.4 1182.0,81.6 1184.8,83.1" fill="#f6c65b"/><rect x="1172.200" y="116.4" width="10.300" height="9.200" fill="#6d7482" stroke="#c9ccd2" stroke-width="1"/><rect x="1171" y="124.6" width="2.200" height="2.200" fill="#f0f0f0"/><circle cx="1185.700" cy="126" r="3.700" fill="#6d7482" fill-opacity="0.800" stroke="#c9ccd2" stroke-width="1"/><path d="M1181.3 121.8L1184.6 120.8L1182.3 118.5Z" fill="#d8d8d8"/><path d="M1184.6 120.8L1189.8 115.6L1187.5 113.3L1182.3 118.5Z" fill="#f0bd4f"/><path d="M1189.8 115.6L1191.6 113.7L1189.4 111.5L1187.5 113.3Z" fill="#ee5f6a"/><path d="M1171.500 143.800H1178.500L1189 154L1181.500 161.500L1171.500 151Z" fill="#d4d4d4"/><circle cx="1174.800" cy="147" r="1.100" fill="#3b4453"/><path d="M1176.500 150.500L1184 157.500M1178.500 148.500L1186 155.500" stroke="#6d7482" stroke-width="0.800"/><path d="M1181.3 152.0L1184.6 151.0L1182.3 148.7Z" fill="#d8d8d8"/><path d="M1184.6 151.0L1189.8 145.8L1187.5 143.5L1182.3 148.7Z" fill="#f0bd4f"/><path d="M1189.8 145.8L1191.6 143.9L1189.4 141.7L1187.5 143.5Z" fill="#ee5f6a"/><rect x="1236.400" y="78.200" width="25.400" height="34.600" fill="#dadada" stroke="#b0b0b0" stroke-width="0.800"/><rect x="1239.400" y="80.900" width="17" height="12.600" fill="#7cc5f8" stroke="#5d6b7c" stroke-width="0.700"/><path d="M1241 99.600H1256M1241 106.800H1254" stroke="#7a7f88" stroke-width="0.900"/><path d="M1244.300 97.800V101.400M1252.500 105V108.600" stroke="#555a63" stroke-width="1.300"/><g transform="translate(1262 108.500) rotate(-40)"><rect x="-6" y="-4.500" width="8.500" height="12" fill="#f6c65b"/><rect x="2.500" y="-5.500" width="6.500" height="14" rx="1" fill="#f1f1f1"/><rect x="9" y="-0.800" width="5.500" height="4.200" fill="#f1f1f1"/></g><path d="M1305 89.9L1299.90 81.07A10.2 10.2 0 0 1 1310.10 81.07Z" fill="#fbc02d"/><path d="M1305 89.9L1310.10 81.07A10.2 10.2 0 0 1 1315.20 89.90Z" fill="#fb8c3a"/><path d="M1305 89.9L1315.20 89.90A10.2 10.2 0 0 1 1310.10 98.73Z" fill="#e5534b"/><path d="M1305 89.9L1310.10 98.73A10.2 10.2 0 0 1 1299.90 98.73Z" fill="#8e4ff0"/><path d="M1305 89.9L1299.90 98.73A10.2 10.2 0 0 1 1294.80 89.90Z" fill="#18a7c9"/><path d="M1305 89.9L1294.80 89.90A10.2 10.2 0 0 1 1299.90 81.07Z" fill="#3ecf7a"/><rect x="1295" y="110.900" width="20" height="0.800" fill="#dcdcdc"/><rect x="1295" y="113.500" width="20" height="3" fill="#dcdcdc"/><rect x="1295" y="119.500" width="20" height="4" fill="#dcdcdc"/><rect x="1295" y="126" width="20" height="4.800" fill="#dcdcdc"/><path d="M1295 144.500H1314.500" stroke="#c8c8c8" stroke-width="1" stroke-dasharray="2 1.200"/><path d="M1295 148.300H1314.500" stroke="#c8c8c8" stroke-width="1.300" stroke-dasharray="3.500 1.200"/><path d="M1295 151.600H1314.500" stroke="#c8c8c8" stroke-width="0.900"/><path d="M1295 154.800H1314.500" stroke="#c8c8c8" stroke-width="1.300" stroke-dasharray="4 1.200 1.500 1.200"/><path d="M1295 158.500H1314.500" stroke="#c8c8c8" stroke-width="1.300" stroke-dasharray="6 1"/><path d="M1479.6 179.5L1485.1 185.0M1485.6 181.0V185.5H1481.1" fill="none" stroke="#d0d0d0" stroke-width="1.200"/><path d="M1878 179.5L1883.5 185.0M1884 181.0V185.5H1879.5" fill="none" stroke="#d0d0d0" stroke-width="1.200"/><path d="M1505 84.700H1500.200V117.300H1505M1522 117.300H1526.800V98.500" fill="none" stroke="#d8d8d8" stroke-width="1.300"/><rect x="1507.200" y="89.200" width="12.600" height="9.300" fill="#4b6c93" stroke="#7cc5f8" stroke-width="1"/><circle cx="1513.400" cy="108.500" r="6.300" fill="#6d7482" stroke="#c9ccd2" stroke-width="1"/><polygon points="1528.1,78.4 1529.5,84.2 1534.1,80.3 1531.8,85.9 1537.8,85.4 1532.7,88.6 1537.8,91.8 1531.8,91.3 1534.1,96.9 1529.5,93.0 1528.1,98.8 1526.7,93.0 1522.1,96.9 1524.4,91.3 1518.4,91.8 1523.5,88.6 1518.4,85.4 1524.4,85.9 1522.1,80.3 1526.7,84.2" fill="#f6c65b"/><rect x="1550.300" y="82.300" width="7.300" height="6.300" fill="#4b6c93" stroke="#7cc5f8" stroke-width="0.900"/><circle cx="1554.100" cy="93.500" r="3.700" fill="#6d7482" stroke="#c9ccd2" stroke-width="0.900"/><path d="M1560.500 80.300H1563.800V99.600H1560.500" fill="none" stroke="#d8d8d8" stroke-width="1.200"/><path d="M1561 88L1567 94M1567 88L1561 94" stroke="#f0505a" stroke-width="1.800"/><path d="M1551 111.300H1548.300V128.300H1551M1558 111.300H1560.700V128.300H1558" fill="none" stroke="#d8d8d8" stroke-width="1.200"/><rect x="1551.600" y="113.500" width="5.500" height="4.500" fill="#4b6c93" stroke="#7cc5f8" stroke-width="0.900"/><circle cx="1554.100" cy="122.800" r="2.800" fill="#6d7482" stroke="#c9ccd2" stroke-width="0.900"/><path d="M1558.2 130.3L1561.5 129.4L1559.2 127.1Z" fill="#d8d8d8"/><path d="M1561.5 129.4L1566.7 124.3L1564.5 122.0L1559.2 127.1Z" fill="#f0bd4f"/><path d="M1566.7 124.3L1568.6 122.4L1566.4 120.2L1564.5 122.0Z" fill="#ee5f6a"/><rect x="1544.400" y="138.600" width="28.200" height="26" fill="#46607f" stroke="#6dbaf2" stroke-width="1.200"/><path d="M1553 142.500H1550V160H1553M1559.500 142.500H1562V152" fill="none" stroke="#c8c8c8" stroke-width="1.100"/><rect x="1553.300" y="144.400" width="5.600" height="4.800" fill="none" stroke="#4fd07a" stroke-width="1"/><circle cx="1556" cy="154.300" r="2.700" fill="none" stroke="#4fd07a" stroke-width="1"/><path d="M1560.500 151.500V162L1563 159.800L1565 163.500L1566.800 162.600L1564.800 159H1568Z" fill="#f4f4f4"/><rect x="1603.800" y="93.900" width="35.900" height="7.900" fill="#f6c65b"/><rect x="1606.3" y="93.900" width="0.900" height="3.6" fill="#7a6430"/><rect x="1609.4" y="93.900" width="0.900" height="2.2" fill="#7a6430"/><rect x="1612.5" y="93.900" width="0.900" height="3.6" fill="#7a6430"/><rect x="1615.6" y="93.900" width="0.900" height="2.2" fill="#7a6430"/><rect x="1618.7" y="93.900" width="0.900" height="3.6" fill="#7a6430"/><rect x="1621.8" y="93.900" width="0.900" height="2.2" fill="#7a6430"/><rect x="1624.9" y="93.900" width="0.900" height="3.6" fill="#7a6430"/><rect x="1628.0" y="93.900" width="0.900" height="2.2" fill="#7a6430"/><rect x="1631.1" y="93.900" width="0.900" height="3.6" fill="#7a6430"/><rect x="1634.2" y="93.900" width="0.900" height="2.2" fill="#7a6430"/><rect x="1637.3" y="93.900" width="0.900" height="3.6" fill="#7a6430"/><path d="M1676 80.300L1682 81L1679 84.500L1683.500 85L1675.500 89.500L1677.500 85.800L1673.500 85Z" fill="#f6c65b"/><rect x="1677.300" y="88" width="12" height="12" fill="#f0f0f0"/><path d="M1680 91H1681.500M1683 91H1687.500M1680 94H1681.500M1683 94H1687.500M1680 97H1681.500M1683 97H1687.500" stroke="#3c8fe0" stroke-width="1.200"/><path d="M1669.300 86.500V98L1672 95.600L1674.200 99.800L1676.200 98.800L1674 94.800H1677.500Z" fill="#f4f4f4"/><rect x="1669.500" y="111.800" width="17.500" height="17" fill="#2f6e4f" fill-opacity="0.500" stroke="#4fd07a" stroke-width="1" stroke-dasharray="2 1.200"/><rect x="1671.500" y="118" width="8.500" height="8.800" fill="#6fd596"/><rect x="1676" y="113.800" width="9.200" height="9.200" fill="#86dca8"/><path d="M1681.300 120V131L1684 128.700L1686 132.500L1688 131.500L1686 127.800H1689.500Z" fill="#f4f4f4"/><rect x="1671.300" y="142.200" width="14.200" height="19.500" fill="#d4d4d4"/><rect x="1673.300" y="144.500" width="10.200" height="3.500" fill="#6a6f78"/><rect x="1673.3" y="150.0" width="2.600" height="2.600" fill="#6a6f78"/><rect x="1673.3" y="153.6" width="2.600" height="2.600" fill="#6a6f78"/><rect x="1673.3" y="157.2" width="2.600" height="2.600" fill="#6a6f78"/><rect x="1676.9" y="150.0" width="2.600" height="2.600" fill="#6a6f78"/><rect x="1676.9" y="153.6" width="2.600" height="2.600" fill="#6a6f78"/><rect x="1676.9" y="157.2" width="2.600" height="2.600" fill="#6a6f78"/><rect x="1680.5" y="150.0" width="2.600" height="2.600" fill="#6a6f78"/><rect x="1680.5" y="153.6" width="2.600" height="2.600" fill="#6a6f78"/><rect x="1680.5" y="157.2" width="2.600" height="2.600" fill="#6a6f78"/><rect x="1716" y="82.800" width="27.800" height="31" fill="#dcab6e"/><path d="M1723 84V80.500H1726.500Q1729.500 77 1732.500 80.500H1736V84Z" fill="#f6f6f6"/><path d="M1724.800 91H1740L1747.900 98.500V118.800H1724.800Z" fill="#dcdcdc"/><path d="M1740 91V98.500H1747.900Z" fill="#f6f6f6"/><rect x="1768.200" y="79.800" width="14.600" height="17.600" fill="#d4d4d4"/><path d="M1770.500 83H1780M1770.500 86.500H1777M1770.500 90H1776.500M1770.500 93.500H1776.500" stroke="#9a9ea6" stroke-width="0.900"/><path d="M1776.500 86.500L1785.500 96.500M1787.800 87.500L1779.500 96.500" stroke="#f4f4f4" stroke-width="1.400"/><circle cx="1779" cy="98.200" r="1.900" fill="none" stroke="#f4f4f4" stroke-width="1.100"/><circle cx="1785.800" cy="98.200" r="1.900" fill="none" stroke="#f4f4f4" stroke-width="1.100"/><path d="M1770 111H1778.500L1781.500 114V127H1770Z" fill="#c9c9c9"/><path d="M1774 114.800H1782L1786 118.800V131.100H1774Z" fill="#dcdcdc" stroke="#3b4453" stroke-width="0.800"/><path d="M1782 114.800V118.800H1786Z" fill="#f4f4f4"/><path d="M1831 82.800H1848.300V95.800H1871.100V113H1831Z" fill="#dcdcdc"/></svg>
<svg class="b" style="left:0;top:880px" width="1901" height="135" viewBox="0 880 1901 135"><path d="M1195.100 986.600V1004.500M1200.600 986.600V1004.500M1206.300 986.600V1004.500M1191 990.200H1209.800M1191 995.600H1209.800M1191 1001.300H1209.800" stroke="#f0f0f0" stroke-width="1.200"/><rect x="1223.2" y="988.3" width="2.800" height="2.800" fill="#f0f0f0"/><rect x="1223.2" y="994.2" width="2.800" height="2.800" fill="#f0f0f0"/><rect x="1223.2" y="999.9" width="2.800" height="2.800" fill="#f0f0f0"/><rect x="1229.1" y="988.3" width="2.800" height="2.800" fill="#f0f0f0"/><rect x="1229.1" y="994.2" width="2.800" height="2.800" fill="#f0f0f0"/><rect x="1229.1" y="999.9" width="2.800" height="2.800" fill="#f0f0f0"/><rect x="1234.9" y="988.3" width="2.800" height="2.800" fill="#f0f0f0"/><rect x="1234.9" y="994.2" width="2.800" height="2.800" fill="#f0f0f0"/><rect x="1234.9" y="999.9" width="2.800" height="2.800" fill="#f0f0f0"/><path d="M1274.200 993.500H1282.600M1278.400 989.300V997.700" stroke="#f0f0f0" stroke-width="1.200"/><rect x="1282" y="998.100" width="11.600" height="5.300" fill="#f0f0f0"/><rect x="1283" y="999.100" width="2.200" height="3.300" fill="#3b4453"/><path d="M1305.800 986.600V1005.500H1325.100" fill="none" stroke="#d8d8d8" stroke-width="1.300"/><path d="M1305.800 999.800H1311.500V1005.500" fill="none" stroke="#d8d8d8" stroke-width="1"/><circle cx="1343" cy="996" r="7.800" fill="none" stroke="#f0f0f0" stroke-width="1.300"/><path d="M1343 996H1355M1343 996L1352.500 986.500" stroke="#f0f0f0" stroke-width="1.300"/><path d="M1387.200 987.600L1402 1002.400" stroke="#e0504a" stroke-width="1.300"/><path d="M1395.200 985.900V1004.500" stroke="#4fd07a" stroke-width="1.300"/><rect x="1393.700" y="994" width="3" height="3" fill="#3b4453" stroke="#f0f0f0" stroke-width="0.900"/><path d="M1436 1003H1455.600" stroke="#a8acb4" stroke-width="1.500"/><path d="M1436.500 1002.400L1450.300 988.700" stroke="#e0e0e0" stroke-width="1.300"/><rect x="1441.900" y="994.100" width="3" height="3" fill="#e0e0e0"/><rect x="1469.300" y="989.400" width="16.500" height="16" fill="none" stroke="#f0f0f0" stroke-width="1.400"/><rect x="1466.500" y="987" width="4.600" height="4.600" fill="#5d8fc7" stroke="#f0f0f0" stroke-width="1.100"/><path d="M1527.5 986.600L1530.7 997.500L1536.0 1004.500L1530.1 1001.500L1527.5 1006.600L1524.9 1001.500L1519.0 1004.500L1524.3 997.500Z" fill="#ffffff"/><circle cx="1536" cy="990.600" r="2.400" fill="none" stroke="#ffffff" stroke-width="1.100"/><path d="M1557.5 986.600L1560.7 997.500L1566.0 1004.500L1560.1 1001.500L1557.5 1006.600L1554.9 1001.500L1549.0 1004.500L1554.3 997.500Z" fill="#dcdcdc"/><path d="M1566 987L1562.800 991.500H1565.200L1563 995.500L1568 990.500H1565.600L1567.600 987Z" fill="#dcdcdc"/><path d="M1588.6 986.600L1591.8 997.500L1597.1 1004.500L1591.1999999999998 1001.500L1588.6 1006.600L1586.0 1001.500L1580.1 1004.500L1585.3999999999999 997.500Z" fill="#8c919c"/><g transform="translate(1664.100 995.700)"><rect x="-2" y="-10.300" width="4" height="5" transform="rotate(0)" fill="#dcdcdc"/><rect x="-2" y="-10.300" width="4" height="5" transform="rotate(45)" fill="#dcdcdc"/><rect x="-2" y="-10.300" width="4" height="5" transform="rotate(90)" fill="#dcdcdc"/><rect x="-2" y="-10.300" width="4" height="5" transform="rotate(135)" fill="#dcdcdc"/><rect x="-2" y="-10.300" width="4" height="5" transform="rotate(180)" fill="#dcdcdc"/><rect x="-2" y="-10.300" width="4" height="5" transform="rotate(225)" fill="#dcdcdc"/><rect x="-2" y="-10.300" width="4" height="5" transform="rotate(270)" fill="#dcdcdc"/><rect x="-2" y="-10.300" width="4" height="5" transform="rotate(315)" fill="#dcdcdc"/><circle r="6.100" fill="none" stroke="#dcdcdc" stroke-width="3.800"/></g><path d="M1705 995.700H1724M1714.500 986.200V1005.200" stroke="#f0f0f0" stroke-width="2.200"/><rect x="1738.900" y="987.700" width="6.600" height="6.600" fill="none" stroke="#e0e0e0" stroke-width="1.100"/><circle cx="1753.800" cy="995" r="3.600" fill="none" stroke="#e0e0e0" stroke-width="1.100"/><path d="M1745.800 999L1750 1006H1741.600Z" fill="none" stroke="#e0e0e0" stroke-width="1.100"/><path d="M1771.500 987.500L1776 983.400H1788L1792 987.500V998.500H1771.500Z" fill="#3f73b8"/><path d="M1788 983.400L1792 987.500V998.500L1788 994Z" fill="#2c5690"/><path d="M1776.800 984V996.500M1771.500 990H1784" stroke="#e8f0ff" stroke-width="1"/><circle cx="1776.800" cy="990" r="1.700" fill="#bfe0ff"/><path d="M1771 997.100H1779L1780.500 999V1004.500H1771Z" fill="#f0b93f"/><path d="M1782 1001L1786 1005.500L1795 996.500" fill="none" stroke="#3fbf5f" stroke-width="2.600"/><rect x="1805.200" y="986.600" width="18.600" height="15.400" fill="#d4d4d4"/><path d="M1806.500 999C1810 999 1810.500 990 1813.500 990C1816.500 990 1816 997 1818.500 997C1820.500 997 1821 992 1823 990.500" fill="none" stroke="#6d7482" stroke-width="1"/><circle cx="1813.500" cy="989.800" r="1.200" fill="#58b8f5"/><path d="M1819.500 995L1825 1006.200H1814Z" fill="#f0a060"/><rect x="1819" y="999" width="1.100" height="3.800" fill="#fff"/><rect x="1819" y="1003.700" width="1.100" height="1.200" fill="#fff"/><rect x="1843.300" y="988.400" width="19.300" height="14.200" fill="none" stroke="#e0e0e0" stroke-width="1.100"/><path d="M1861 990.200L1856 995.200M1861 990.200H1856.500M1861 990.200V994.700M1845 1000.800L1850 995.800M1845 1000.800H1849.500M1845 1000.800V996.300" stroke="#e0e0e0" stroke-width="1.500"/><path d="M1875 988H1895M1875 995.400H1895M1875 1002.900H1895" stroke="#f0f0f0" stroke-width="2.200"/><rect x="398.0" y="890.3" width="1.900" height="1.900" fill="#e4e4e4"/><rect x="398.0" y="894.5" width="1.900" height="1.900" fill="#e4e4e4"/><rect x="401.9" y="890.3" width="1.900" height="1.900" fill="#e4e4e4"/><rect x="401.9" y="894.5" width="1.900" height="1.900" fill="#e4e4e4"/><rect x="405.7" y="890.3" width="1.900" height="1.900" fill="#e4e4e4"/><rect x="405.7" y="894.5" width="1.900" height="1.900" fill="#e4e4e4"/><rect x="409.6" y="890.3" width="1.900" height="1.900" fill="#e4e4e4"/><rect x="409.6" y="894.5" width="1.900" height="1.900" fill="#e4e4e4"/><rect x="413.4" y="890.3" width="1.900" height="1.900" fill="#e4e4e4"/><rect x="413.4" y="894.5" width="1.900" height="1.900" fill="#e4e4e4"/><rect x="417.2" y="890.3" width="1.900" height="1.900" fill="#e4e4e4"/><rect x="417.2" y="894.5" width="1.900" height="1.900" fill="#e4e4e4"/><path d="M400.500 906L411.300 916.500M411.300 906L400.500 916.500" stroke="#dcdcdc" stroke-width="2.200"/><path d="M399.300 949.300L409.500 939" stroke="#b9b9b9" stroke-width="3" stroke-linecap="round"/><path d="M413.500 933.200A5 5 0 1 0 416.400 939.300L412.300 940.300L409.800 937.800Z" fill="#b9b9b9"/><rect x="429.700" y="953.800" width="18.600" height="13.700" fill="none" stroke="#5c5c5e" stroke-width="1.100"/><rect x="429.700" y="953.800" width="18.600" height="3" fill="#5c5c5e"/><path d="M431.500 959.500L435 961.700L431.500 964M436 964.300H440.500" fill="none" stroke="#5c5c5e" stroke-width="0.900"/><path d="M451.300 959H460.900L456.100 963.900Z" fill="#57575a"/><path d="M1489.300 963.900H1498.600L1494 959.200Z" fill="#4c4c4f"/></svg>
<svg class="b" style="left:1740px;top:236px" width="161" height="230" viewBox="1740 236 161 230"><rect x="1827.400" y="249.400" width="14.200" height="4.800" fill="#1c1e22"/><rect x="1828" y="249.800" width="13.100" height="3" fill="#f2f2f2"/><rect x="1856.800" y="242.400" width="8.800" height="8.800" fill="none" stroke="#1c1e22" stroke-width="3.200"/><rect x="1856.800" y="242.400" width="8.800" height="8.800" fill="none" stroke="#f2f2f2" stroke-width="1.600"/><rect x="1853.800" y="246" width="8.300" height="8.300" fill="#23262b" stroke="#1c1e22" stroke-width="3.400"/><rect x="1853.800" y="246" width="8.300" height="8.300" fill="#2a2d33" stroke="#f2f2f2" stroke-width="2.100"/><path d="M1879.200 243.800L1889 252.800M1889 243.800L1879.200 252.800" stroke="#1c1e22" stroke-width="4.600"/><path d="M1879.200 243.800L1889 252.800M1889 243.800L1879.200 252.800" stroke="#f2f2f2" stroke-width="2.800"/><defs><radialGradient id="shd" cx="0.5" cy="0.5" r="0.5"><stop offset="0" stop-color="#1e2126" stop-opacity="0.9"/><stop offset="0.6" stop-color="#23262b" stop-opacity="0.6"/><stop offset="1" stop-color="#2c2f34" stop-opacity="0"/></radialGradient><linearGradient id="cl" x1="0" y1="0" x2="0" y2="1"><stop offset="0" stop-color="#adaeb1"/><stop offset="1" stop-color="#97989b"/></linearGradient><linearGradient id="cf" x1="0" y1="0" x2="0" y2="1"><stop offset="0" stop-color="#b3b4b7"/><stop offset="1" stop-color="#9c9da0"/></linearGradient></defs><path fill-rule="evenodd" fill="#54575d" d="M1750.900 373A65.800 42.700 0 1 0 1882.500 373A65.800 42.700 0 1 0 1750.900 373ZM1765 371.500A52 32.500 0 1 0 1869 371.500A52 32.500 0 1 0 1765 371.500Z"/><ellipse cx="1817" cy="378" rx="46" ry="24" fill="url(#shd)"/><text transform="matrix(1.224 -0.547 0.709 0.754 1778.7 341.5)" font-family="Liberation Sans,sans-serif" font-weight="bold" font-size="15" fill="#85878c" stroke="#85878c" stroke-width="0.5" text-anchor="middle" dominant-baseline="central">N</text><text transform="matrix(1.224 -0.547 0.709 0.754 1763.2 393.1)" font-family="Liberation Sans,sans-serif" font-weight="bold" font-size="18" fill="#a6a7aa" stroke="#a6a7aa" stroke-width="0.5" text-anchor="middle" dominant-baseline="central">W</text><text transform="matrix(1.224 -0.547 0.709 0.754 1859.8 400.9)" font-family="Liberation Sans,sans-serif" font-weight="bold" font-size="18" fill="#a6a7aa" stroke="#a6a7aa" stroke-width="0.5" text-anchor="middle" dominant-baseline="central">S</text><text transform="matrix(1.224 -0.547 0.709 0.754 1861.2 346.4)" font-family="Liberation Sans,sans-serif" font-weight="bold" font-size="15" fill="#8d8f94" stroke="#8d8f94" stroke-width="0.5" text-anchor="middle" dominant-baseline="central">E</text><path d="M1781.600 321.800L1820.400 306.400L1853.100 326L1812.900 343.600Z" fill="#b6b7ba"/><path d="M1781.600 321.800L1812.900 343.600L1813.200 386.800L1783.900 364.500Z" fill="url(#cl)"/><path d="M1812.900 343.600L1853.100 326L1850.600 367L1813.200 386.800Z" fill="url(#cf)"/><path d="M1807.200 340L1813 337.500L1820.200 340.500L1820.300 349L1813.100 352L1807.300 347.500Z" fill="#a9b0bd" fill-opacity="0.85"/><path d="M1783.500 323.200L1812.900 343.600L1851.500 326.800M1812.900 343.600L1813.200 385" fill="none" stroke="#666a72" stroke-width="0.900" stroke-dasharray="7 3.500"/><text transform="matrix(0.86 -0.376 0.62 0.43 1816.2 324.5)" font-family="Liberation Sans,sans-serif" font-weight="bold" font-size="10" fill="#50545c" stroke="#50545c" stroke-width="0.35" text-anchor="middle" dominant-baseline="central">TOP</text><text transform="matrix(0.775 -0.349 -0.2 1.32 1832.8 357)" font-family="Liberation Sans,sans-serif" font-weight="bold" font-size="10" fill="#50545c" stroke="#50545c" stroke-width="0.35" text-anchor="middle" dominant-baseline="central">FRONT</text><text transform="matrix(0.5 0.348 0.1 1.2 1797.3 354.4)" font-family="Liberation Sans,sans-serif" font-weight="bold" font-size="10" fill="#50545c" stroke="#50545c" stroke-width="0.35" text-anchor="middle" dominant-baseline="central">LEFT</text><rect x="1788.500" y="436.800" width="55.200" height="19.700" rx="4" fill="#9a9dab" stroke="#abaebb" stroke-width="0.800"/><text x="1793" y="451" font-family="Liberation Sans,sans-serif" font-size="12.800" fill="#7c7f8a">WCS</text><path d="M1830.800 443.600H1839.400L1835.100 448.300Z" fill="#a8abb8" stroke="#80838e" stroke-width="0.800"/></svg>
</body></html>
